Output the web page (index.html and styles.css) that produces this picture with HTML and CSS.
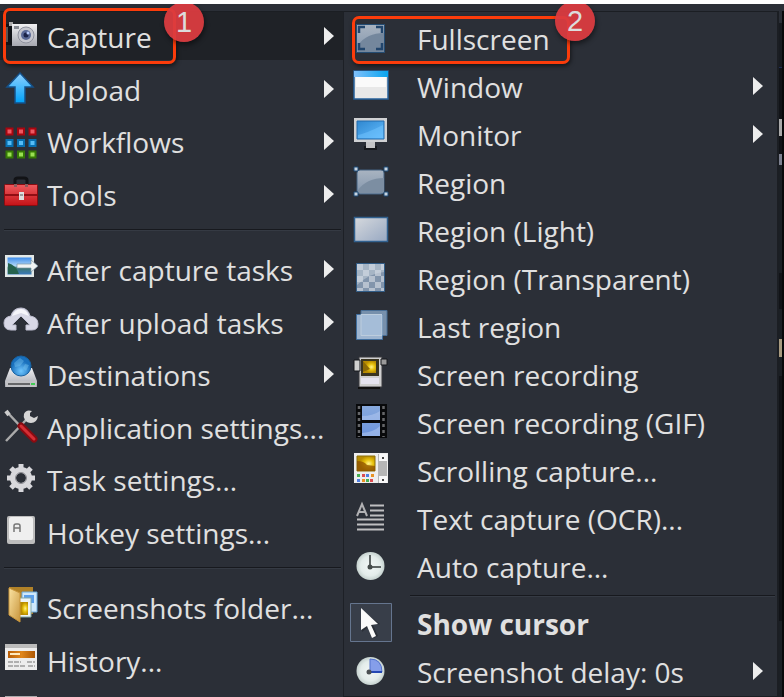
FILE: index.html
```html
<!DOCTYPE html>
<html lang="en">
<head>
<meta charset="utf-8">
<title>Capture menu</title>
<link rel="stylesheet" href="styles.css">
</head>
<body>
<svg class="defs" aria-hidden="true">
  <defs>
    <linearGradient id="silver" x2="0" y2="1"><stop stop-color="#f0f0f2"/><stop offset="1" stop-color="#a6a8b0"/></linearGradient>
    <linearGradient id="blue" x2="0" y2="1"><stop stop-color="#8fd0ff"/><stop offset="1" stop-color="#00a2f8"/></linearGradient>
    <linearGradient id="aqua"><stop stop-color="#7fc0fb"/><stop offset="1" stop-color="#08a5f0"/></linearGradient>
    <linearGradient id="screen" x2="1" y2="1"><stop stop-color="#2f87cf"/><stop offset="1" stop-color="#62bcff"/></linearGradient>
    <linearGradient id="steel" x2="0" y2="1"><stop stop-color="#a9b4c1"/><stop offset="1" stop-color="#8396ad"/></linearGradient>
    <linearGradient id="pale" x2="1" y2="1"><stop stop-color="#d6d9dd"/><stop offset="1" stop-color="#97a8c2"/></linearGradient>
    <linearGradient id="red" x2="0" y2="1"><stop stop-color="#ee5a5e"/><stop offset="1" stop-color="#c51217"/></linearGradient>
    <linearGradient id="gold" x2="1" y2="1"><stop stop-color="#fbe3a2"/><stop offset="1" stop-color="#c8953c"/></linearGradient>
    <linearGradient id="photo" x2="0" y2="1"><stop stop-color="#3d8ceb"/><stop offset=".5" stop-color="#b4daf8"/><stop offset=".6" stop-color="#3d776c"/><stop offset="1" stop-color="#3978ba"/></linearGradient>
    <linearGradient id="film" x2="0" y2="1"><stop stop-color="#87a9dd"/><stop offset="1" stop-color="#6c94dd"/></linearGradient>
    <linearGradient id="orange"><stop stop-color="#b85d05"/><stop offset=".5" stop-color="#e0861b"/><stop offset="1" stop-color="#ad5703"/></linearGradient>
    <radialGradient id="globe" cy=".75"><stop stop-color="#70c7ff"/><stop offset="1" stop-color="#1970bd"/></radialGradient>
    <radialGradient id="dial"><stop stop-color="#f2f7f6"/><stop offset=".7" stop-color="#e3ecea"/><stop offset="1" stop-color="#c5d1ce"/></radialGradient>
    <radialGradient id="sun" cx=".65"><stop stop-color="#fff38b"/><stop offset=".5" stop-color="#e8c20d"/><stop offset="1" stop-color="#b88c00"/></radialGradient>
  </defs>
</svg>
<main class="desktop">
  <nav class="menu main-menu" aria-label="Main">
    <ul class="group group-four">
      <li><button class="item current"><svg class="icon" viewBox="0 0 36 36"><path d="M3 6h7v21H3z" fill="#111317"/><path d="M3 9h2v15H3z" fill="#555"/><path d="M6 4h4v4H6z" fill="#aaa"/><path d="M9 6h25v22H9z" fill="url(#silver)"/><path d="M11 8h5v3h-5z" fill="#888c94"/><circle cx="23" cy="17" r="8" fill="#c5c6ce" stroke="#8f929e"/><circle cx="23" cy="17" r="5" fill="#5a6996"/><circle cx="23" cy="17" r="2.500" fill="#1c2449"/><circle cx="25" cy="15" r="1.500" fill="#b6c9fa"/></svg><span class="label">Capture</span><i class="arrow"></i></button></li>
      <li><button class="item"><svg class="icon" viewBox="0 0 36 36"><path d="M17 2 30 16H22V32H12V16H4z" fill="url(#blue)" stroke="#14518a" stroke-width="1.500"/></svg><span class="label">Upload</span><i class="arrow"></i></button></li>
      <li><button class="item"><svg class="icon" viewBox="0 0 36 36"><g stroke-width="2"><g fill="#ed5962" stroke="#a80710"><path d="M3.500 5.500h6v6h-6zM15 5.500h6v6h-6zM26.500 5.500h6v6h-6z"/></g><g fill="#57bdf5" stroke="#0870b0"><path d="M3.500 17h6v6h-6zM15 17h6v6h-6zM26.500 17h6v6h-6z"/></g><g fill="#9ae052" stroke="#367a05"><path d="M3.500 28.500h6v6h-6zM15 28.500h6v6h-6zM26.500 28.500h6v6h-6z"/></g></g></svg><span class="label">Workflows</span><i class="arrow"></i></button></li>
      <li><button class="item"><svg class="icon" viewBox="0 0 36 36"><path d="M12 9V4q0-2 3-2h6q3 0 3 2v5" fill="none" stroke="#121316" stroke-width="3"/><rect x="1.500" y="8.500" width="33" height="21" rx="1" fill="url(#red)" stroke="#8b0c10"/><path d="M2 18h32v2H2z" fill="#910e13"/><path d="M16 16h5v8h-5z" fill="#dedede"/><path d="M17 18h3v2h-3z" fill="#999"/><path d="M11 8h3v3h-3zM22 8h3v3h-3z" fill="#8d5a5c"/></svg><span class="label">Tools</span><i class="arrow"></i></button></li>
    </ul>
    <hr class="rule">
    <ul class="group group-six">
      <li><button class="item"><svg class="icon" viewBox="0 0 36 36"><path d="M2 4h29v22H2z" fill="#e3e9e8"/><path d="M4.500 6.500h24v17h-24z" fill="url(#photo)"/><path d="M5 12q8 2 11 11H5z" fill="#25624d"/><path d="M14 13h14V9l7 6-7 6v-4H14z" fill="#f0f4f4" stroke="#7894a4" stroke-width=".7"/></svg><span class="label">After capture tasks</span><i class="arrow"></i></button></li>
      <li><button class="item"><svg class="icon" viewBox="0 0 36 36"><path d="M8 26Q1 26 1 19q0-6 7-7 2-8 10-8 7 0 9 8 8 1 8 8 0 6-6 6h-6v-5h4l-9-9-9 9h4v5z" fill="#d8d8e6" stroke="#c0c0d1"/><path d="M9 12q3-7 9-7 5 0 8 7l-8-3z" fill="#f5f5fa"/></svg><span class="label">After upload tasks</span><i class="arrow"></i></button></li>
      <li><button class="item"><svg class="icon" viewBox="0 0 36 36"><path d="M7 12h22l5 13v6H2v-6z" fill="url(#silver)"/><path d="M3 25h30v6H3z" fill="#c2c2c5"/><path d="M5 27h22v2H5z" fill="#656668"/><path d="M28 27h4v2h-4z" fill="#41cc55"/><circle cx="18" cy="10" r="10" fill="url(#globe)" stroke="#1762a2"/><path d="m11 7 6-5 4 3-4 5-5 1zm11 1 4 1-3 6-3-3z" fill="#7dc7f3" opacity=".4"/></svg><span class="label">Destinations</span><i class="arrow"></i></button></li>
      <li><button class="item"><svg class="icon" viewBox="0 0 36 36"><path d="m4 3 15 16M3 32l20-21" stroke="#aaa" stroke-width="2.500"/><path d="M3 2 6 6" stroke="#ccc" stroke-width="4"/><path d="M29 2q-6-2-8 3-1 3 1 6 2 3 6 3 6 0 7-7l-4 2-4-2V4z" fill="#d5d5d5"/><path d="m18 17 13 13" stroke="#890b11" stroke-width="7" stroke-linecap="round"/><path d="m18 17 13 13" stroke="#d62e34" stroke-width="3" stroke-linecap="round"/></svg><span class="label">Application settings...</span></button></li>
      <li><button class="item"><svg class="icon" viewBox="0 0 36 36"><circle cx="18" cy="17" r="8" fill="none" stroke="#d8d8dc" stroke-width="6"/><path d="M18 3v5M18 26v5M4 17h6M26 17h6M8 7l4 4M24 23l4 4M28 7l-4 4M12 23l-4 4" stroke="#d8d8dc" stroke-width="5"/><circle cx="18" cy="17" r="5.500" fill="none" stroke="#8a8a90"/></svg><span class="label">Task settings...</span></button></li>
      <li><button class="item"><svg class="icon" viewBox="0 0 36 36"><rect x="4" y="2" width="28" height="28" rx="2" fill="#bdbdbd"/><rect x="6" y="3" width="24" height="23" rx="2" fill="#efefef"/><path d="M11 18v-6q0-2 2-2h2q2 0 2 2v6m-6-4h6" fill="none" stroke="#777" stroke-width="1.500"/></svg><span class="label">Hotkey settings...</span></button></li>
    </ul>
    <hr class="rule">
    <ul class="group group-tail">
      <li><button class="item"><svg class="icon" viewBox="0 0 36 36"><path d="M6-2h24v27H6z" fill="#b18228"/><path d="M19 3h15v20H19z" fill="#cfe8fa" stroke="#6ca9d8"/><path d="M21 6h10v8H21z" fill="#5b9fea"/><path d="M16 9h12v19H16z" fill="#eef4f4" stroke="#86aaa9"/><path d="M17 13h8v13h-8z" fill="url(#sun)"/><path d="m6-1 11 5v29L6 26z" fill="url(#gold)" stroke="#c9963d"/></svg><span class="label">Screenshots folder...</span></button></li>
      <li><button class="item"><svg class="icon" viewBox="0 0 36 36"><path d="M2 2h32v26H2z" fill="#ededed"/><path d="M2 2h32v4H2z" fill="#bbb"/><path d="M5 9h27v7H5z" fill="url(#orange)"/><path d="M7 12h10" stroke="#ffe9bc" stroke-width="2"/><path d="M5 20h13M5 24h17M24 20h8M25 24h7" stroke="#b0b0b0" stroke-width="2" stroke-dasharray="5 1"/></svg><span class="label">History...</span></button></li>
      <li><button class="item" aria-label="Image history"><svg class="icon" viewBox="0 0 36 36"><path d="M2 2h32v28H2z" fill="#a9a9ab"/></svg></button></li>
    </ul>
  </nav>

  <nav class="menu sub-menu" aria-label="Capture">
    <ul class="list">
      <li><button class="item"><svg class="icon" viewBox="0 0 36 36"><path d="M3.500 4.500h28v28h-28z" fill="url(#steel)" stroke="#244c73"/><path d="M5 25Q14 13 31 13v19H5z" fill="#74879d"/><path d="M6 13V7h6M23 7h6v6M29 23v6h-6M12 29H6v-6" fill="none" stroke="#21456c" stroke-width="2.500"/></svg><span class="label">Fullscreen</span></button></li>
      <li><button class="item"><svg class="icon" viewBox="0 0 36 36"><path d="M1 3h34v28H1z" fill="#e8e8e8" stroke="#26609b" stroke-width="1.500"/><path d="M1 3h34v6H1z" fill="url(#aqua)"/><path d="M3 9h30v10H3z" fill="#fafafa"/></svg><span class="label">Window</span><i class="arrow"></i></button></li>
      <li><button class="item"><svg class="icon" viewBox="0 0 36 36"><path d="M11 30h13v4H11z" fill="#16181c"/><path d="M13 26h9v6h-9z" fill="#c4c4c6"/><rect x="1" y="2" width="33" height="24" fill="#d0d1d3"/><path d="M4 5h27v18H4z" fill="url(#screen)" stroke="#226aac"/><path d="M5 19q9-2 25-10v13H5z" fill="#73c6ff" opacity=".5"/></svg><span class="label">Monitor</span><i class="arrow"></i></button></li>
      <li><button class="item"><svg class="icon" viewBox="0 0 36 36"><rect x="4" y="6" width="27" height="24" rx="3" fill="url(#steel)" stroke="#456382"/><path d="M5 26q9-12 26-12v15H5z" fill="#7c8ea2"/><g fill="#c7d4e1" stroke="#1d4a77"><path d="M1 3h4v4H1zM31 3h4v4h-4zM1 28h4v4H1zM31 28h4v4h-4z"/></g></svg><span class="label">Region</span></button></li>
      <li><button class="item"><svg class="icon" viewBox="0 0 36 36"><path d="M1.500 5.500h33v24h-33z" fill="url(#pale)" stroke="#31618f" stroke-width="1.500"/></svg><span class="label">Region (Light)</span></button></li>
      <li><button class="item"><svg class="icon" viewBox="0 0 36 36"><path d="M3.500 3.500h28v28h-28z" fill="#b6c1cf" stroke="#315c86"/><path d="M10 4h6v6h-6zM22 4h6v6h-6zM4 10h6v6H4zM16 10h6v6h-6zM28 10h3v6h-3zM10 16h6v6h-6zM22 16h6v6h-6zM4 22h6v6H4zM16 22h6v6h-6zM28 22h3v6h-3zM10 28h6v3h-6zM22 28h6v3h-6z" fill="#7589a2" opacity=".8"/><path d="M4 4h27v8Q17 13 4 25z" fill="#d3dbe4" opacity=".45"/></svg><span class="label">Region (Transparent)</span></button></li>
      <li><button class="item"><svg class="icon" viewBox="0 0 36 36"><path d="M8 2.500h26v25H8z" fill="#7790ac" stroke="#486e96"/><path d="M3.500 6.500h26v25h-26z" fill="#9eb5d0" stroke="#406f9f"/><path d="M8 6.500h21v21H8z" fill="#a5bdd8" stroke="#bdcddd"/></svg><span class="label">Last region</span></button></li>
      <li><button class="item"><svg class="icon" viewBox="0 0 36 36"><path d="M6 1h23v30H6z" fill="#d0d0d0" stroke="#3a3b3e"/><path d="M1 4h6v11H1z" fill="#d0d0d0" stroke="#17191c"/><path d="M28 3h6v6h-6z" fill="#999" stroke="#17191c"/><path d="M8 3h18v17H8z" fill="#3a3520"/><path d="M10 5h13v12H10z" fill="url(#sun)"/><path d="m10 5 7 8-7 3z" fill="#8c6a06"/><path d="M8 22h18v6H8z" fill="#e5e4ef"/><path d="M5 31h22v2H5z" fill="#111"/></svg><span class="label">Screen recording</span></button></li>
      <li><button class="item"><svg class="icon" viewBox="0 0 36 36"><path d="M3 0h31v34H3z" fill="#08090b"/><path d="M9 2h18v14H9zM9 19h18v13H9z" fill="url(#film)"/><path d="M9 12q11 0 18-5v9H9zM9 29q12-1 18-7v10H9z" fill="#b2c9ef" opacity=".55"/><path d="M6 2v31M30.500 2v31" stroke="#66676a" stroke-width="2.500" stroke-dasharray="3 3"/></svg><span class="label">Screen recording (GIF)</span></button></li>
      <li><button class="item"><svg class="icon" viewBox="0 0 36 36"><path d="M1 1h34v30H1z" fill="#eee"/><path d="M4 4h18v15H4z" fill="url(#sun)" stroke="#8c7108"/><path d="M4 9q7 0 10 4l8 1v5H4z" fill="#8c4f02" opacity=".75"/><path d="M25 2h9v29h-9z" fill="#b6b6b6"/><path d="M26 2h8v7h-8zM26 24h8v7h-8z" fill="#f8f8f8"/><path d="M29 5h2v2h-2zM29 27h2v2h-2z" fill="#444"/><path d="M4 22h3v3H4zM13 27h3v3h-3z" fill="#48af52"/><path d="M9 22h3v3H9zM17 27h3v3h-3z" fill="#dc4d52"/><path d="M13 22h3v3h-3zM4 27h3v3H4z" fill="#507fe0"/><path d="M18 22h3v3h-3zM9 27h3v3H9z" fill="#e99224"/></svg><span class="label">Scrolling capture...</span></button></li>
      <li><button class="item"><svg class="icon" viewBox="0 0 36 36"><path d="m4 16 5-12 5 12M6 12h7" fill="none" stroke="#b1b1b3" stroke-width="2"/><path d="M17 5.500h14M17 10.500h14M17 15.500h14M4 19.500h27M4 24.500h27M4 29.500h27" stroke="#bfbfc1" stroke-width="2"/></svg><span class="label">Text capture (OCR)...</span></button></li>
      <li><button class="item"><svg class="icon" viewBox="0 0 36 36"><circle cx="17.500" cy="18" r="14" fill="url(#dial)"/><path d="M17 7v12h11" fill="none" stroke="#606766" stroke-width="2"/><circle cx="17" cy="19" r="2.500" fill="#444b4a"/></svg><span class="label">Auto capture...</span></button></li>
    </ul>
    <hr class="rule sub-rule">
    <ul class="list">
      <li><button class="item default" role="menuitemcheckbox" aria-checked="true"><svg class="icon" viewBox="0 0 36 36"><path d="M-2.500-1.500h41v38h-41z" fill="#383e49" stroke="#65758e"/><path d="M9 5v22l6-5 6 11 4-2-5-11 7-1z" fill="#17191e" opacity=".4"/><path d="M8 3v22l6-4 5 12 4-2-5-11 7-1z" fill="#fafafa"/></svg><span class="label">Show cursor</span></button></li>
      <li><button class="item"><svg class="icon" viewBox="0 0 36 36"><circle cx="17.500" cy="18" r="14" fill="url(#dial)"/><path d="M17 6q12 0 12 13H17z" fill="#859eea" stroke="#5271cb"/><path d="M17 19h12" stroke="#2447b3" stroke-width="2"/><circle cx="16" cy="19" r="2.500" fill="#4b5053"/></svg><span class="label">Screenshot delay: 0s</span><i class="arrow"></i></button></li>
    </ul>
  </nav>
  <div class="backdrop"></div>

  <div class="callout callout-capture"><span class="badge">1</span></div>
  <div class="callout callout-fullscreen"><span class="badge">2</span></div>
</main>
</body>
</html>
```
FILE: styles.css
```css
* { box-sizing: border-box; }

body {
  margin: 0;
  background: #fff;
  color: #e0e0e0;
  font: 28px/36px "Open Sans", "Noto Sans", sans-serif;
}

.defs { position: absolute; width: 0; height: 0; }

.desktop {
  position: relative;
  display: grid;
  grid-template-columns: 343px minmax(0, 1fr) 5px;
  height: calc(100vh - 4px);
  margin-top: 4px;
  padding-top: 7px;
  overflow: hidden;
  background: #2b2f37;
}

.menu {
  min-height: 0;
  border-top: 1px solid #1b1e23;
}

.main-menu { overflow: hidden; }

.sub-menu {
  border-left: 1px solid #1d2026;
  border-right: 2px solid #1b1e23;
  border-bottom: 1px solid #1b1e23;
  padding-top: 4px;
}

ul { margin: 0; padding: 0; list-style: none; }

.group { display: grid; grid-auto-rows: 1fr; }
.group-four { height: 210px; }
.group-six { height: 315px; }
.group-tail { height: 158px; }

.item {
  display: flex;
  align-items: center;
  width: 100%;
  height: 48px;
  padding: 0 9px 0 3px;
  border: 0;
  background: none;
  color: inherit;
  font: inherit;
  text-align: left;
  white-space: nowrap;
}

.current { background: #1f2227; }

.icon {
  flex: none;
  width: 36px;
  height: 36px;
  overflow: visible;
}

.label { padding: 2px 0 0 8px; }

.arrow {
  margin-left: auto;
  border: solid transparent;
  border-width: 9px 0 9px 10px;
  border-left-color: #ededed;
}

.sub-menu .item { padding: 0 14px 4px 9px; }
.sub-menu .label { padding-left: 28px; }
.sub-menu .default { font-weight: 700; }

.rule {
  height: 2px;
  margin: 7px 2px 14px 4px;
  border: 0;
  border-top: 1px solid #17191e;
  border-bottom: 1px solid #353a43;
}

.sub-rule { margin: 3px 2px 4px 66px; }

.backdrop {
  border-right: 2px solid #08090a;
  background: linear-gradient(#2b2f37 12px, #181b20 12px 56px, #202d55 56px 57px, #111317 57px 108px, #aaa 108px 125px, #111317 125px 143px, #7d8190 143px 154px, #1b1f24 154px 262px, #111317 262px 298px, #1b1f24 298px 328px, #a99b80 328px 346px, #1b1f24 346px 365px, #111317 365px 610px, #1b1f24 610px);
}

.callout {
  position: absolute;
  border: 3px solid #fb3c0b;
  border-radius: 7px;
  box-shadow: 1px 2px 4px #0008;
  pointer-events: none;
}

.callout-capture { left: 3px; top: 4px; width: 173px; height: 56px; }
.callout-fullscreen { left: 352px; top: 12px; width: 218px; height: 48px; }

.badge {
  position: absolute;
  top: -9px;
  right: -31px;
  width: 40px;
  height: 40px;
  border-radius: 50%;
  background: #dc3c40f0;
  color: #dcdcdc;
  box-shadow: 1px 3px 5px #0007;
  font: 29px/40px "Liberation Sans", sans-serif;
  text-align: center;
}

.callout-fullscreen .badge { top: -18px; right: -28px; }
```
